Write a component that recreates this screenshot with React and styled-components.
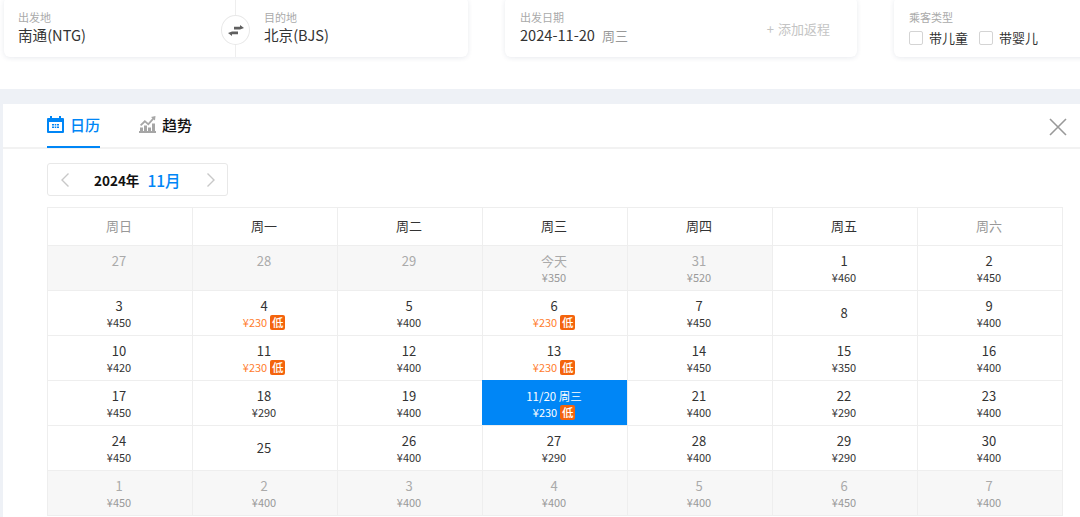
import React from "react";
import styled, { createGlobalStyle } from "styled-components";

const GlobalStyle = createGlobalStyle`
  html, body {
    margin: 0;
    padding: 0;
    background: #fff;
    overflow: hidden;
    font-family: "Noto Sans CJK SC", "Noto Sans", sans-serif;
    color: #333;
  }
  * { box-sizing: border-box; }
`;

const Page = styled.div`
  width: 1080px;
  height: 517px;
  overflow: hidden;
  background: #eef1f6;
`;

const SearchBar = styled.div`
  display: flex;
  gap: 37px;
  height: 89px;
  padding-left: 4px;
  background: #fff;
`;

const Card = styled.div`
  position: relative;
  display: flex;
  flex: none;
  width: ${p => p.$width}px;
  height: 60px;
  margin-top: -3px;
  background: #fff;
  border-radius: 6px;
  box-shadow: 0 1px 5px rgba(30, 50, 90, 0.1);
`;

const Field = styled.div`
  width: ${p => p.$width || "auto"};
  flex: ${p => (p.$width ? "none" : 1)};
  padding: 13px 0 0 ${p => p.$pad}px;
  border-right: ${p => (p.$divider ? "1px solid #eee" : "none")};
`;

const Label = styled.div`
  font-size: 11px;
  line-height: 15px;
  color: #aaa;
`;

const Value = styled.div`
  font-size: 14.6px;
  line-height: 20px;
  color: #333;
`;

const Week = styled.span`
  margin-left: 7px;
  font-size: 13px;
  color: #999;
`;

const SwapButton = styled.div`
  position: absolute;
  left: 217px;
  top: 18px;
  display: flex;
  align-items: center;
  justify-content: center;
  width: 29px;
  height: 30px;
  background: #fff;
  border: 1px solid #e8e8e8;
  border-radius: 50%;
`;

const AddReturn = styled.div`
  position: absolute;
  right: 27px;
  top: 23px;
  font-size: 13px;
  word-spacing: 1px;
  line-height: 18px;
  color: #c4c4c4;
`;

const CheckRow = styled.div`
  display: flex;
  align-items: center;
  margin-top: 3px;
`;

const CheckBox = styled.span`
  width: 14px;
  height: 14px;
  margin-right: 6px;
  border: 1px solid #d4d4d4;
  border-radius: 2px;
`;

const CheckText = styled.span`
  margin-right: 11px;
  font-size: 13px;
  line-height: 20px;
  color: #333;
`;

const Panel = styled.div`
  height: 413px;
  margin: 15px 0 0 3px;
  background: #fff;
`;

const TabBar = styled.div`
  position: relative;
  display: flex;
  gap: 39px;
  height: 45px;
  padding-left: 44px;
  border-bottom: 2px solid #f2f2f2;
`;

const Tab = styled.div`
  display: flex;
  align-items: center;
  gap: 6px;
  height: 44px;
  padding-bottom: 2px;
  font-size: 15px;
  font-weight: 500;
  color: ${p => (p.$active ? "#0086f6" : "#111")};
  border-bottom: 2px solid ${p => (p.$active ? "#0086f6" : "transparent")};
`;

const CloseButton = styled.div`
  position: absolute;
  right: 12px;
  top: 13px;
  display: flex;
`;

const MonthNav = styled.div`
  display: flex;
  align-items: center;
  width: 181px;
  height: 33px;
  margin: 14px 0 11px 44px;
  padding: 0 10px 0 11px;
  border: 1px solid #e8e8e8;
  border-radius: 3px;
  white-space: nowrap;
`;

const YearText = styled.span`
  margin-left: 23px;
  font-size: 13.5px;
  font-weight: 700;
  color: #111;
`;

const MonthText = styled.span`
  margin: 0 auto 0 8px;
  font-size: 15.5px;
  font-weight: 500;
  color: #0086f6;
`;

const Calendar = styled.div`
  display: grid;
  grid-template-columns: repeat(7, 145px);
  width: 1016px;
  margin-left: 44px;
  border-top: 1px solid #eee;
  border-left: 1px solid #eee;
`;

const HeadCell = styled.div`
  display: flex;
  align-items: center;
  justify-content: center;
  height: 38px;
  padding: 0 2px 2px 0;
  font-size: 13px;
  color: ${p => (p.$weekend ? "#999" : "#333")};
  border-right: 1px solid #eee;
  border-bottom: 1px solid #eee;
`;

const DayCell = styled.div`
  display: flex;
  flex-direction: column;
  align-items: center;
  justify-content: ${p => (p.$center ? "center" : "flex-start")};
  height: 45px;
  padding: ${p => (p.$center ? "0 2px 0 0" : "6px 2px 0 0")};
  background: ${p => (p.$selected ? "#0086f6" : p.$off ? "#f7f7f7" : "#fff")};
  color: ${p => (p.$selected ? "#fff" : p.$off ? "#aaa" : "#333")};
  border-right: 1px solid #eee;
  border-bottom: 1px solid #eee;
  box-shadow: ${p => (p.$selected ? "-1px -1px 0 #0086f6" : "none")};
`;

const DayNum = styled.div`
  font-size: ${p => (p.$small ? 11.5 : 13)}px;
  line-height: 18px;
`;

const PriceRow = styled.div`
  display: flex;
  align-items: center;
  gap: 3px;
  height: 15px;
  font-size: 11px;
  line-height: 15px;
  color: ${p => (p.$selected ? "#fff" : p.$low ? "#ff7d2e" : p.$off ? "#999" : "#333")};
`;

const LowBadge = styled.span`
  display: inline-flex;
  align-items: center;
  justify-content: center;
  width: 15px;
  height: 15px;
  font-size: 11.5px;
  font-weight: 500;
  color: #fff;
  background: #f4640c;
  border-radius: 2px;
`;

const CalendarIcon = () => (
  <svg width="17" height="17" viewBox="0 0 17 17">
    <path fill="#0086f6" d="M3 0h2v2h7V0h2v2h2a1 1 0 0 1 1 1v13a1 1 0 0 1-1 1H1a1 1 0 0 1-1-1V3a1 1 0 0 1 1-1h2z" />
    <rect x="2" y="6" width="13" height="9" fill="#fff" />
    <path fill="#0086f6" d="M5 8h2v1.5H5zM7.7 8h1.6v1.5H7.7zM10 8h2v1.5h-2zM5 10.5h2V12H5zM7.7 10.5h1.6V12H7.7zM10 10.5h2V12h-2z" />
  </svg>
);

const TrendIcon = () => (
  <svg width="17" height="17" viewBox="0 0 17 17" fill="#a6a6a6">
    <path d="M0 15h17v2H0z" />
    <path d="M1 11.5h3V15H1zM5 9.5h3V15H5zM9 11.5h3V15H9zM13 7.5h3V15h-3z" />
    <path d="M1 8.8 5.8 4l3.4 3 4.2-4.8L12 1l4.5-1L16 4.6l-1.3-1.2-5.3 6-3.4-3L2.2 10z" />
  </svg>
);

const SwapIcon = () => (
  <svg width="16" height="11" viewBox="0 0 16 11" fill="#5f5f5f">
    <path d="M6 1.8h6V0l4 2.9-4 1.6H6z" />
    <path d="M10 9.2H4V11L0 8.1l4-1.6h6z" />
  </svg>
);

const Chevron = ({ left }) => (
  <svg width="12" height="16" viewBox="0 0 12 16" fill="none" stroke="#c8c8c8" strokeWidth="1.4">
    <path d={left ? "M9.5 1.5 3 8l6.5 6.5" : "M2.5 1.5 9 8l-6.5 6.5"} />
  </svg>
);

const CloseIcon = () => (
  <svg width="20" height="20" viewBox="0 0 20 20" stroke="#999" strokeWidth="1.6">
    <path d="M2 2l16 16M18 2 2 18" />
  </svg>
);

const weekDays = ["周日", "周一", "周二", "周三", "周四", "周五", "周六"];

// d: day text, p: price, low: cheapest mark, off: greyed out
const days = [
  { d: "27", off: true }, { d: "28", off: true }, { d: "29", off: true },
  { d: "今天", p: 350, off: true }, { d: "31", p: 520, off: true }, { d: "1", p: 460 }, { d: "2", p: 450 },
  { d: "3", p: 450 }, { d: "4", p: 230, low: true }, { d: "5", p: 400 }, { d: "6", p: 230, low: true },
  { d: "7", p: 450 }, { d: "8" }, { d: "9", p: 400 },
  { d: "10", p: 420 }, { d: "11", p: 230, low: true }, { d: "12", p: 400 }, { d: "13", p: 230, low: true },
  { d: "14", p: 450 }, { d: "15", p: 350 }, { d: "16", p: 400 },
  { d: "17", p: 450 }, { d: "18", p: 290 }, { d: "19", p: 400 },
  { d: "11/20 周三", p: 230, low: true, selected: true },
  { d: "21", p: 400 }, { d: "22", p: 290 }, { d: "23", p: 400 },
  { d: "24", p: 450 }, { d: "25" }, { d: "26", p: 400 }, { d: "27", p: 290 },
  { d: "28", p: 400 }, { d: "29", p: 290 }, { d: "30", p: 400 },
  { d: "1", p: 450, off: true }, { d: "2", p: 400, off: true }, { d: "3", p: 400, off: true },
  { d: "4", p: 400, off: true }, { d: "5", p: 400, off: true }, { d: "6", p: 450, off: true },
  { d: "7", p: 400, off: true }
];

const App = () => (
  <Page>
    <GlobalStyle />
    <SearchBar>
      <Card $width={464}>
        <Field $width="232px" $pad={14} $divider>
          <Label>出发地</Label>
          <Value>南通(NTG)</Value>
        </Field>
        <Field $pad={28}>
          <Label>目的地</Label>
          <Value>北京(BJS)</Value>
        </Field>
        <SwapButton>
          <SwapIcon />
        </SwapButton>
      </Card>
      <Card $width={352}>
        <Field $pad={15}>
          <Label>出发日期</Label>
          <Value>
            2024-11-20<Week>周三</Week>
          </Value>
        </Field>
        <AddReturn>+ 添加返程</AddReturn>
      </Card>
      <Card $width={200}>
        <Field $pad={15}>
          <Label>乘客类型</Label>
          <CheckRow>
            <CheckBox />
            <CheckText>带儿童</CheckText>
            <CheckBox />
            <CheckText>带婴儿</CheckText>
          </CheckRow>
        </Field>
      </Card>
    </SearchBar>
    <Panel>
      <TabBar>
        <Tab $active>
          <CalendarIcon />
          日历
        </Tab>
        <Tab>
          <TrendIcon />
          趋势
        </Tab>
        <CloseButton>
          <CloseIcon />
        </CloseButton>
      </TabBar>
      <MonthNav>
        <Chevron left />
        <YearText>2024年</YearText>
        <MonthText>11月</MonthText>
        <Chevron />
      </MonthNav>
      <Calendar>
        {weekDays.map((w, i) => (
          <HeadCell key={w} $weekend={i === 0 || i === 6}>
            {w}
          </HeadCell>
        ))}
        {days.map((day, i) => (
          <DayCell key={i} $off={day.off} $selected={day.selected} $center={!day.p && !day.off}>
            <DayNum $small={day.selected}>{day.d}</DayNum>
            {day.p && (
              <PriceRow $low={day.low} $off={day.off} $selected={day.selected}>
                ¥{day.p}
                {day.low && <LowBadge>低</LowBadge>}
              </PriceRow>
            )}
          </DayCell>
        ))}
      </Calendar>
    </Panel>
  </Page>
);

export default App;
